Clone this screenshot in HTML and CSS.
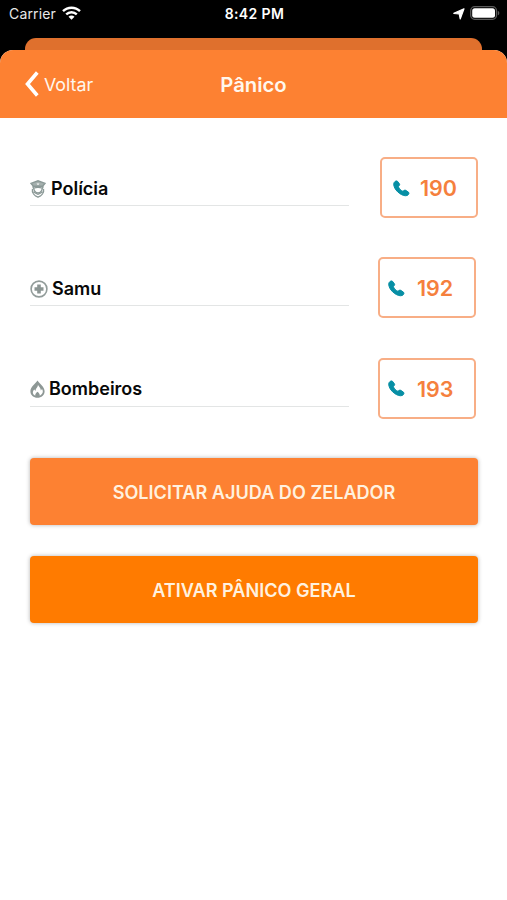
FILE: index.html
```html
<!DOCTYPE html>
<html lang="pt-BR">
<head>
<meta charset="utf-8">
<meta name="viewport" content="width=device-width, initial-scale=1">
<title>Pânico</title>
<link rel="stylesheet" href="styles.css">
</head>
<body>
<svg class="defs" width="0" height="0" aria-hidden="true">
  <symbol id="phone" viewBox="0 0 17 17">
    <path d="M1.300 2.300C2.200 1 3.700.5 4.500 1.300l1.900 2.500c.9 1.300-.6 1.900-1 2.900.5 1.800 2.400 3.800 4.400 4.500 1-.4 1.800-1.500 2.900-.9l2.700 1.800c1.100 1.100.4 2.400-1 3.300C10.300 17.300 2.200 11.400 1 6 .600 4.400.600 3.400 1.300 2.300z" stroke="#078fa5" stroke-width="1" stroke-linejoin="round"/>
  </symbol>
</svg>
<div class="status">
  <div class="carrier">
    <span>Carrier</span>
    <svg width="19" height="14" viewBox="0 0 19 14" fill="none" stroke="#fff" stroke-width="2.400">
      <path d="M1 5.200C5.700.600 13.300.600 18 5.200M4.200 8.400c3-2.900 7.600-2.900 10.600 0"/>
      <path d="M6.500 10.700c1.700-1.600 4.300-1.600 6 0l-3 3z" fill="#fff" stroke="none"/>
    </svg>
  </div>
  <div class="time">8:42 PM</div>
  <div class="indicators">
    <svg width="12" height="12" viewBox="0 0 12 12" fill="#fff"><path d="M11 .8 7.200 11 6.200 6 .8 5.300z" stroke="#fff" stroke-width="1.200" stroke-linejoin="round"/></svg>
    <svg width="30" height="14" viewBox="0 0 30 14">
      <rect x=".7" y=".7" width="25.800" height="12.600" rx="4" fill="none" stroke="#5b5b5b" stroke-width="1.300"/>
      <rect x="2.200" y="2.200" width="22.800" height="9.600" rx="2.500" fill="#fff"/>
      <path d="M27.800 4.700c2 .8 2 3.800 0 4.600z" fill="#5b5b5b"/>
    </svg>
  </div>
</div>
<div class="back-sheet"></div>
<main class="sheet">
  <header class="nav">
    <div class="back">
      <svg width="14" height="26" viewBox="0 0 14 26" fill="none" stroke="#fff" stroke-width="3.600"><path d="M12.300 1.500 2.500 13l9.800 11.500"/></svg>
      <span>Voltar</span>
    </div>
    <h1>Pânico</h1>
  </header>
  <div class="content">
    <section class="contact first">
      <div class="label police">
        <svg width="16" height="18" viewBox="0 0 16 18" fill="none" stroke="#8b9997" stroke-width="1.400">
          <path d="M1 3.400 8 .8l7 2.600-2.400 2.900H3.400z" fill="#a5b0ae"/>
          <path d="M3.200 6v2.300M12.800 6v2.300M2.500 9C1.500 13 5 16 8 17.200 11 16 14.500 13 13.500 9"/>
          <path d="M3.700 8.200c2.500-1 6.100-1 8.600 0-.2 2.500-1.500 4.300-4.300 4.800-2.800-.5-4.100-2.300-4.300-4.800z" fill="#fff"/>
          <path d="M2.700 11.800 8 14.300l5.300-2.500" stroke-width="1.100"/>
          <path d="M6.500 3.500h3L8 5.200z" fill="#fff" stroke="none"/>
        </svg>
        <span>Polícia</span>
      </div>
      <div class="call"><svg width="17" height="17"><use href="#phone"/></svg><span>190</span></div>
    </section>
    <section class="contact">
      <div class="label samu">
        <svg width="18" height="18" viewBox="0 0 18 18" fill="none" stroke="#929c9a"><circle cx="9" cy="9" r="7.900" stroke-width="1.600"/><path d="M9 4.500v9M4.500 9h9" stroke-width="3.600" stroke="#8b9593"/></svg>
        <span>Samu</span>
      </div>
      <div class="call"><svg width="17" height="17"><use href="#phone"/></svg><span>192</span></div>
    </section>
    <section class="contact">
      <div class="label fire">
        <svg width="15" height="18" viewBox="0 0 15 18">
          <path d="M7.500.5C5.300 4 .4 6.900.4 11.200c0 4 3.200 6.500 7.100 6.500s7.100-2.500 7.100-6.500C14.600 6.900 9.700 4 7.500.5z" fill="#8d9795"/>
          <path d="M8 5c-.3 2.500-2.500 3.500-2.500 6L4.300 9.500c-2.200 2.300-1.800 4.700.9 6.200-.1-1.800 1-2.800 2.300-3.900 1.300 1.100 2.400 2.100 2.300 3.900 2.900-1.400 3.900-4.200 2.200-6.600l-1.200 1.500C10.800 8.300 9.500 7 8 5z" fill="#fff"/>
        </svg>
        <span>Bombeiros</span>
      </div>
      <div class="call"><svg width="17" height="17"><use href="#phone"/></svg><span>193</span></div>
    </section>
    <button class="action help" type="button">SOLICITAR AJUDA DO ZELADOR</button>
    <button class="action panic" type="button">ATIVAR PÂNICO GERAL</button>
  </div>
</main>
</body>
</html>
```
FILE: styles.css
```css
* { box-sizing: border-box; }
body {
  margin: 0;
  height: 900px;
  overflow: hidden;
  background: #000;
  font-family: Inter, "Liberation Sans", sans-serif;
  display: flex;
  flex-direction: column;
}
.defs { position: absolute; }
svg { display: block; flex: none; }
.status {
  height: 38px;
  padding: 5px 7px 0 9px;
  display: grid;
  grid-template-columns: 1fr auto 1fr;
  color: #fff;
  font-size: 14px;
  line-height: 18px;
}
.carrier { display: flex; gap: 6px; color: #e8e8e8; letter-spacing: .15px; }
.carrier svg { margin-top: 1px; }
.time { font-weight: 600; font-size: 14px; letter-spacing: .4px; }
.indicators { display: flex; justify-content: flex-end; gap: 5px; padding-top: 1px; }
.indicators svg:first-child { margin-top: 2px; }
.back-sheet {
  height: 12px;
  margin: 0 25px;
  border-radius: 11px 11px 0 0;
  background: #df702d;
}
.sheet {
  flex: 1;
  background: #fff;
  border-radius: 13px 13px 0 0;
  overflow: hidden;
}
.nav {
  height: 68px;
  background: #fd8132;
  color: #fff7ed;
  padding: 0 25px;
  display: grid;
  grid-template-columns: 1fr auto 1fr;
  align-items: center;
}
.back { display: flex; align-items: center; gap: 5px; font-size: 17.8px; }
.nav h1 { margin: 0; font-size: 20.3px; font-weight: 600; }
.content { padding: 39px 29px 0 30px; }
.contact {
  height: 61px;
  margin-bottom: 39.300px;
  padding-right: 2px;
  display: flex;
  justify-content: space-between;
}
.first { padding-right: 0; }
.label {
  width: 319px;
  height: 49px;
  padding-top: 15px;
  border-bottom: 1px solid #e3e5e5;
  display: flex;
  align-items: center;
  gap: 4px;
  font-size: 18px;
  font-weight: 600;
  line-height: 24px;
  color: #080808;
}
.police { gap: 5px; }
.call {
  width: 98px;
  height: 61px;
  padding: 1px 0 0 8px;
  border: 2px solid #f8ae86;
  border-radius: 5px;
  display: flex;
  align-items: center;
  gap: 12px;
  color: #f5803d;
  font-size: 21.5px;
  font-weight: 600;
}
.first .call { padding-left: 11px; gap: 10px; }
.call svg { fill: #078fa5; }
.action {
  display: block;
  width: 448px;
  height: 67px;
  margin: 0 0 31px;
  padding: 2px 0 0;
  border: 0;
  border-radius: 4px;
  background: #fd8132;
  color: #fff1df;
  font: 600 18.1px/24px Inter, "Liberation Sans", sans-serif;
  box-shadow: 0 0 4px rgba(0, 0, 0, .3);
}
.panic { background: #ff7b00; }
```
